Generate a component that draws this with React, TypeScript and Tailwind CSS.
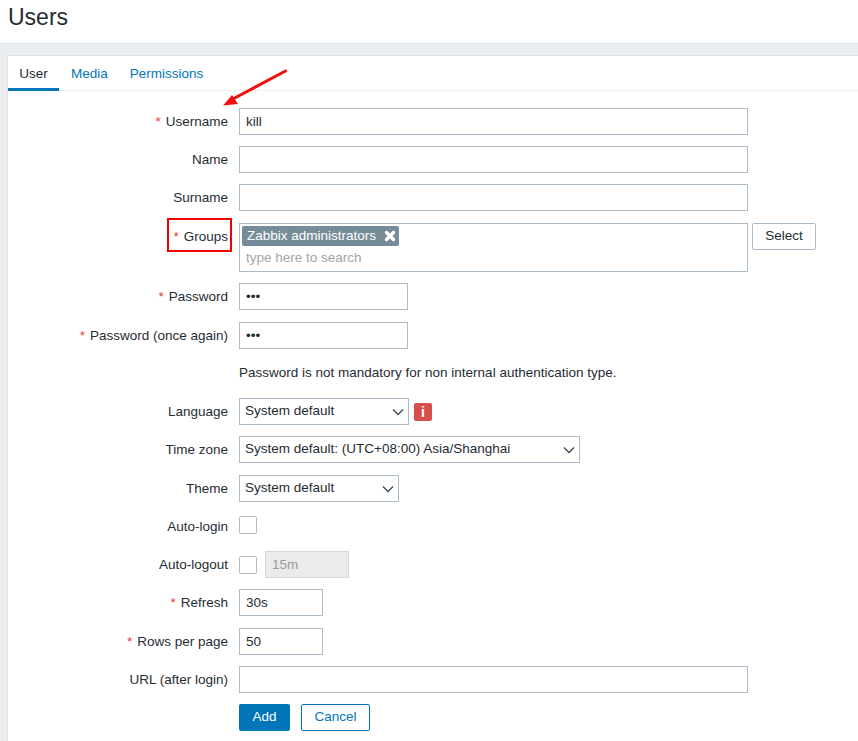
import type { ReactNode } from "react";

const inputClass =
  "h-[27px] border border-[#acbbc7] bg-white px-[6px] text-[13.5px] text-[#1f2c33] outline-none";

const Label = ({ text, required }: { text: string; required?: boolean }) => (
  <div className="w-[220px] shrink-0 text-right text-[13.5px] leading-[27px] text-[#1f2c33]">
    {required && <span className="mr-[5px] text-[#e33734]">*</span>}
    {text}
  </div>
);

const Row = ({
  label,
  required,
  className,
  children,
}: {
  label?: string;
  required?: boolean;
  className?: string;
  children: ReactNode;
}) => (
  <div className={`flex items-start gap-[11px] ${className ?? ""}`}>
    {label ? <Label text={label} required={required} /> : <div className="w-[220px] shrink-0" />}
    {children}
  </div>
);

const Chevron = () => (
  <svg width="14" height="8" viewBox="0 0 14 8" fill="none" className="shrink-0">
    <path d="M2 1.5 L7 6.5 L12 1.5" stroke="#3a4750" strokeWidth="1.3" />
  </svg>
);

const SelectBox = ({ value, className }: { value: string; className: string }) => (
  <div className={`flex h-[27px] items-center justify-between border border-[#acbbc7] bg-white pl-[5px] pr-[3px] text-[13.5px] text-[#1f2c33] ${className}`}>
    <span>{value}</span>
    <Chevron />
  </div>
);

const CheckBox = () => (
  <div className="h-[18px] w-[18px] rounded-[2px] border border-[#acbbc7] bg-white" />
);

export default function App() {
  return (
    <div className="relative h-[741px] w-[858px] overflow-hidden bg-white font-['Liberation_Sans',Arial,sans-serif]">
      {/* Header */}
      <div className="h-[44px] border-b border-[#dfe4e7] pl-[8px]">
        <h1 className="text-[23px] leading-[34px] font-normal text-[#1f2c33]">Users</h1>
      </div>

      {/* Page body */}
      <div className="h-[697px] bg-[#ebeef0] pt-[11px] pl-[7px]">
        <div className="h-full border-t border-l border-[#dfe4e7] bg-white">
          {/* Tabs */}
          <div className="flex h-[35px] border-b border-[#ebeef0] text-[13.5px]">
            <div className="h-[35px] w-[51px] border-b-[3px] border-[#0275b8] pt-[8px] text-center text-[#1f2c33]">User</div>
            <div className="ml-[12px] pt-[8px] text-[#0275b8]">Media</div>
            <div className="ml-[22px] pt-[8px] text-[#0275b8]">Permissions</div>
          </div>

          {/* Form */}
          <div className="pt-[17px]">
            <Row label="Username" required>
              <input readOnly value="kill" className={`${inputClass} w-[509px]`} />
            </Row>
            <Row label="Name" className="mt-[11px]">
              <input readOnly className={`${inputClass} w-[509px]`} />
            </Row>
            <Row label="Surname" className="mt-[11px]">
              <input readOnly className={`${inputClass} w-[509px]`} />
            </Row>
            <Row label="Groups" required className="mt-[12px]">
              <div className="h-[49px] w-[509px] border border-[#acbbc7] bg-white pt-[2px] pl-[2px]">
                <div className="flex h-[20px] w-[157px] items-center justify-between rounded-[2px] bg-[#768d99] pl-[5px] pr-[3px] text-[13.5px] text-white">
                  <span>Zabbix administrators</span>
                  <svg width="12" height="12" viewBox="0 0 12 12" className="shrink-0">
                    <path d="M2.5 2.5 L9.5 9.5 M9.5 2.5 L2.5 9.5" stroke="#fff" strokeWidth="3.4" strokeLinecap="round" />
                  </svg>
                </div>
                <div className="pt-[3px] pl-[4px] text-[13.5px] leading-[18px] text-[#a4a4a4]">type here to search</div>
              </div>
              <button className="ml-[-7px] h-[27px] w-[64px] rounded-[2px] border border-[#acbbc7] bg-white text-[13.5px] text-[#1f2c33]">Select</button>
            </Row>
            <Row label="Password" required className="mt-[11px]">
              <input readOnly type="password" value="abc" className={`${inputClass} w-[169px]`} />
            </Row>
            <Row label="Password (once again)" required className="mt-[12px]">
              <input readOnly type="password" value="abc" className={`${inputClass} w-[169px]`} />
            </Row>
            <Row className="mt-[10px]">
              <div className="text-[13.5px] leading-[27px] text-[#1f2c33]">Password is not mandatory for non internal authentication type.</div>
            </Row>
            <Row label="Language" className="mt-[12px]">
              <SelectBox value="System default" className="w-[170px]" />
              <div className="ml-[-6px] mt-[5px] flex h-[18px] w-[18px] items-center justify-center rounded-[2px] bg-[#d64e4e] text-[14px] font-bold text-white">i</div>
            </Row>
            <Row label="Time zone" className="mt-[11px]">
              <SelectBox value="System default: (UTC+08:00) Asia/Shanghai" className="w-[341px]" />
            </Row>
            <Row label="Theme" className="mt-[12px]">
              <SelectBox value="System default" className="w-[160px]" />
            </Row>
            <Row label="Auto-login" className="mt-[11px]">
              <div className="pt-[3px]">
                <CheckBox />
              </div>
            </Row>
            <Row label="Auto-logout" className="mt-[11px]">
              <div className="flex items-center gap-[8px]">
                <CheckBox />
                <input readOnly value="15m" className="h-[27px] w-[84px] border border-[#d3d9de] bg-[#ebebeb] px-[6px] text-[13.5px] text-[#9a9a9a] outline-none" />
              </div>
            </Row>
            <Row label="Refresh" required className="mt-[11px]">
              <input readOnly value="30s" className={`${inputClass} w-[84px]`} />
            </Row>
            <Row label="Rows per page" required className="mt-[12px]">
              <input readOnly value="50" className={`${inputClass} w-[84px]`} />
            </Row>
            <Row label="URL (after login)" className="mt-[11px]">
              <input readOnly className={`${inputClass} w-[509px]`} />
            </Row>
            <Row className="mt-[11px]">
              <div className="flex gap-[11px]">
                <button className="h-[27px] w-[51px] rounded-[2px] bg-[#0275b8] text-[13.5px] text-white">Add</button>
                <button className="h-[27px] w-[69px] rounded-[2px] border border-[#0275b8] bg-white text-[13.5px] text-[#0275b8]">Cancel</button>
              </div>
            </Row>
          </div>
        </div>
      </div>

      {/* Annotations */}
      <div className="absolute left-[167px] top-[218px] h-[34px] w-[65px] border-2 border-[#f00000]" />
      <svg className="absolute left-[215px] top-[65px]" width="80" height="45" viewBox="0 0 80 45" fill="none">
        <path d="M70.5 6 L16 35" stroke="#f01010" strokeWidth="3" strokeLinecap="round" />
        <path d="M8 40.5 L17 30 L23 39 Z" fill="#f01010" />
      </svg>
    </div>
  );
}
